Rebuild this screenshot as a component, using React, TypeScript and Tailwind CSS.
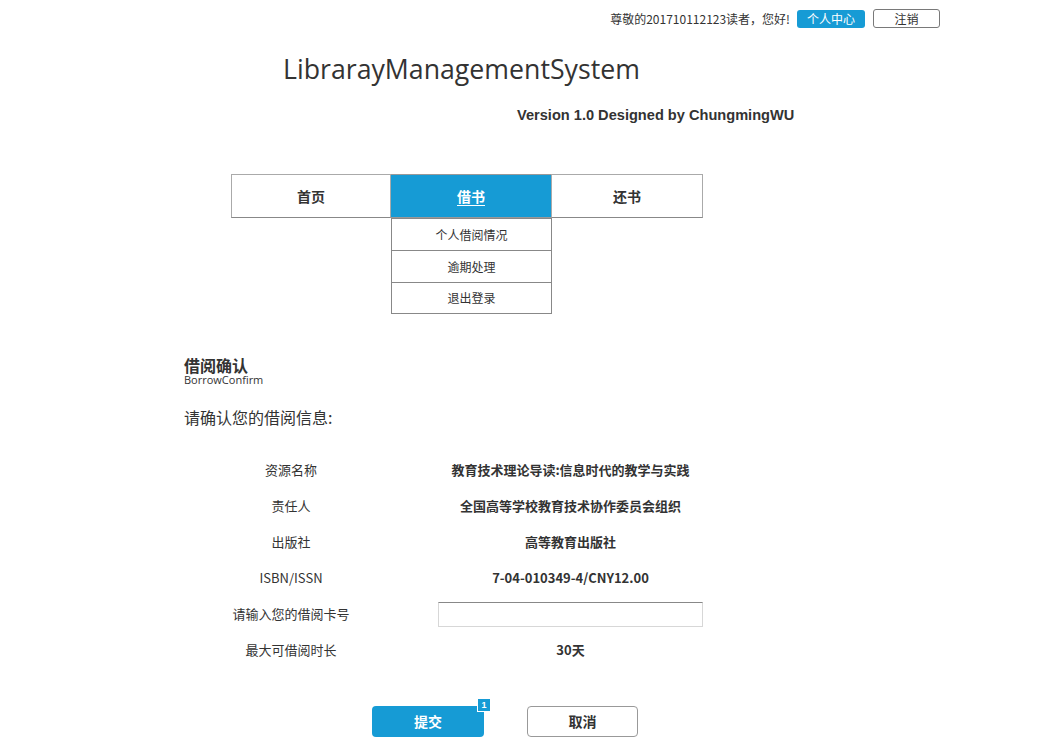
import React from "react";

const cjk = "font-['Noto_Sans_CJK_SC','Noto_Sans',sans-serif]";

type RowProps = { label: string; value?: string; input?: boolean };

const InfoRow = ({ label, value, input }: RowProps) => (
  <div className="flex h-[36px] items-center">
    <div className="w-[214px] text-center text-[13px] text-[#333]">{label}</div>
    <div className="w-[265px] ml-[40px] flex justify-center">
      {input ? (
        <input className="w-[265px] h-[25px] border border-[#d7d7d7] border-t-[#888] outline-none" />
      ) : (
        <span className="text-[13px] font-bold text-[#333]">{value}</span>
      )}
    </div>
  </div>
);

export default function App() {
  return (
    <div className={`w-[1042px] h-[756px] bg-white overflow-hidden ${cjk} text-[#333]`}>
      {/* top bar */}
      <div className="flex justify-end items-center gap-[8px] pt-[9px] pr-[102px]">
        <span className="text-[12px] mr-[-1px]">尊敬的201710112123读者，您好!</span>
        <button className="w-[68px] h-[18px] rounded-[3px] bg-[#169bd5] text-white text-[12px] leading-[18px]">
          个人中心
        </button>
        <button className="w-[67px] h-[19px] rounded-[3px] border border-[#797979] bg-white text-[12px] leading-[17px]">
          注销
        </button>
      </div>

      {/* title */}
      <div className="pl-[283px] mt-[21px] text-[26.7px] leading-[40px] text-[#333] font-['Open_Sans',sans-serif]">
        LibrarayManagementSystem
      </div>
      <div className="pl-[517px] mt-[17px] text-[14.6px] font-bold font-['Liberation_Sans',sans-serif] leading-[18px]">
        Version 1.0 Designed by ChungmingWU
      </div>

      {/* nav */}
      <div className="ml-[231px] mt-[50px] flex">
        <div className="w-[160px] h-[44px] border border-[#aaa] border-b-[#888] flex items-center justify-center text-[14px] font-bold">
          首页
        </div>
        <div className="relative w-[160px] h-[44px] bg-[#169bd5] border-y border-[#999] flex items-center justify-center text-[14px] font-bold text-white">
          <span className="underline underline-offset-[3px]">借书</span>
          <div className="absolute left-0 top-[43px] w-[161px] bg-white border border-[#888] text-[#333] font-normal">
            <div className="h-[32px] flex items-center justify-center text-[12px] border-b border-[#888]">个人借阅情况</div>
            <div className="h-[32px] flex items-center justify-center text-[12px] border-b border-[#888]">逾期处理</div>
            <div className="h-[30px] flex items-center justify-center text-[12px]">退出登录</div>
          </div>
        </div>
        <div className="w-[152px] h-[44px] border border-[#aaa] border-b-[#888] flex items-center justify-center text-[14px] font-bold">
          还书
        </div>
      </div>

      {/* section */}
      <div className="ml-[184px] mt-[139px]">
        <div className="text-[16px] font-bold leading-[17px]">借阅确认</div>
        <div className="text-[11px] leading-[11px] font-['Open_Sans',sans-serif]">BorrowConfirm</div>
        <div className="text-[16px] mt-[21px] leading-[22px]">请确认您的借阅信息:</div>
      </div>

      <div className="ml-[184px] mt-[24px]">
        <InfoRow label="资源名称" value="教育技术理论导读:信息时代的教学与实践" />
        <InfoRow label="责任人" value="全国高等学校教育技术协作委员会组织" />
        <InfoRow label="出版社" value="高等教育出版社" />
        <InfoRow label="ISBN/ISSN" value="7-04-010349-4/CNY12.00" />
        <InfoRow label="请输入您的借阅卡号" input />
        <InfoRow label="最大可借阅时长" value="30天" />
      </div>

      {/* buttons */}
      <div className="ml-[372px] mt-[38px] flex gap-[43px]">
        <div className="relative">
          <button className="w-[112px] h-[31px] rounded-[4px] bg-[#169bd5] text-white text-[14px] font-bold">
            提交
          </button>
          <span className="absolute left-[105px] top-[-8px] w-[14px] h-[14px] bg-[#169bd5] border border-white text-white text-[9px] font-bold leading-[12px] text-center font-['Liberation_Sans',sans-serif]">
            1
          </span>
        </div>
        <button className="w-[111px] h-[31px] rounded-[4px] bg-white border border-[#999] text-[14px] font-bold">
          取消
        </button>
      </div>
    </div>
  );
}
